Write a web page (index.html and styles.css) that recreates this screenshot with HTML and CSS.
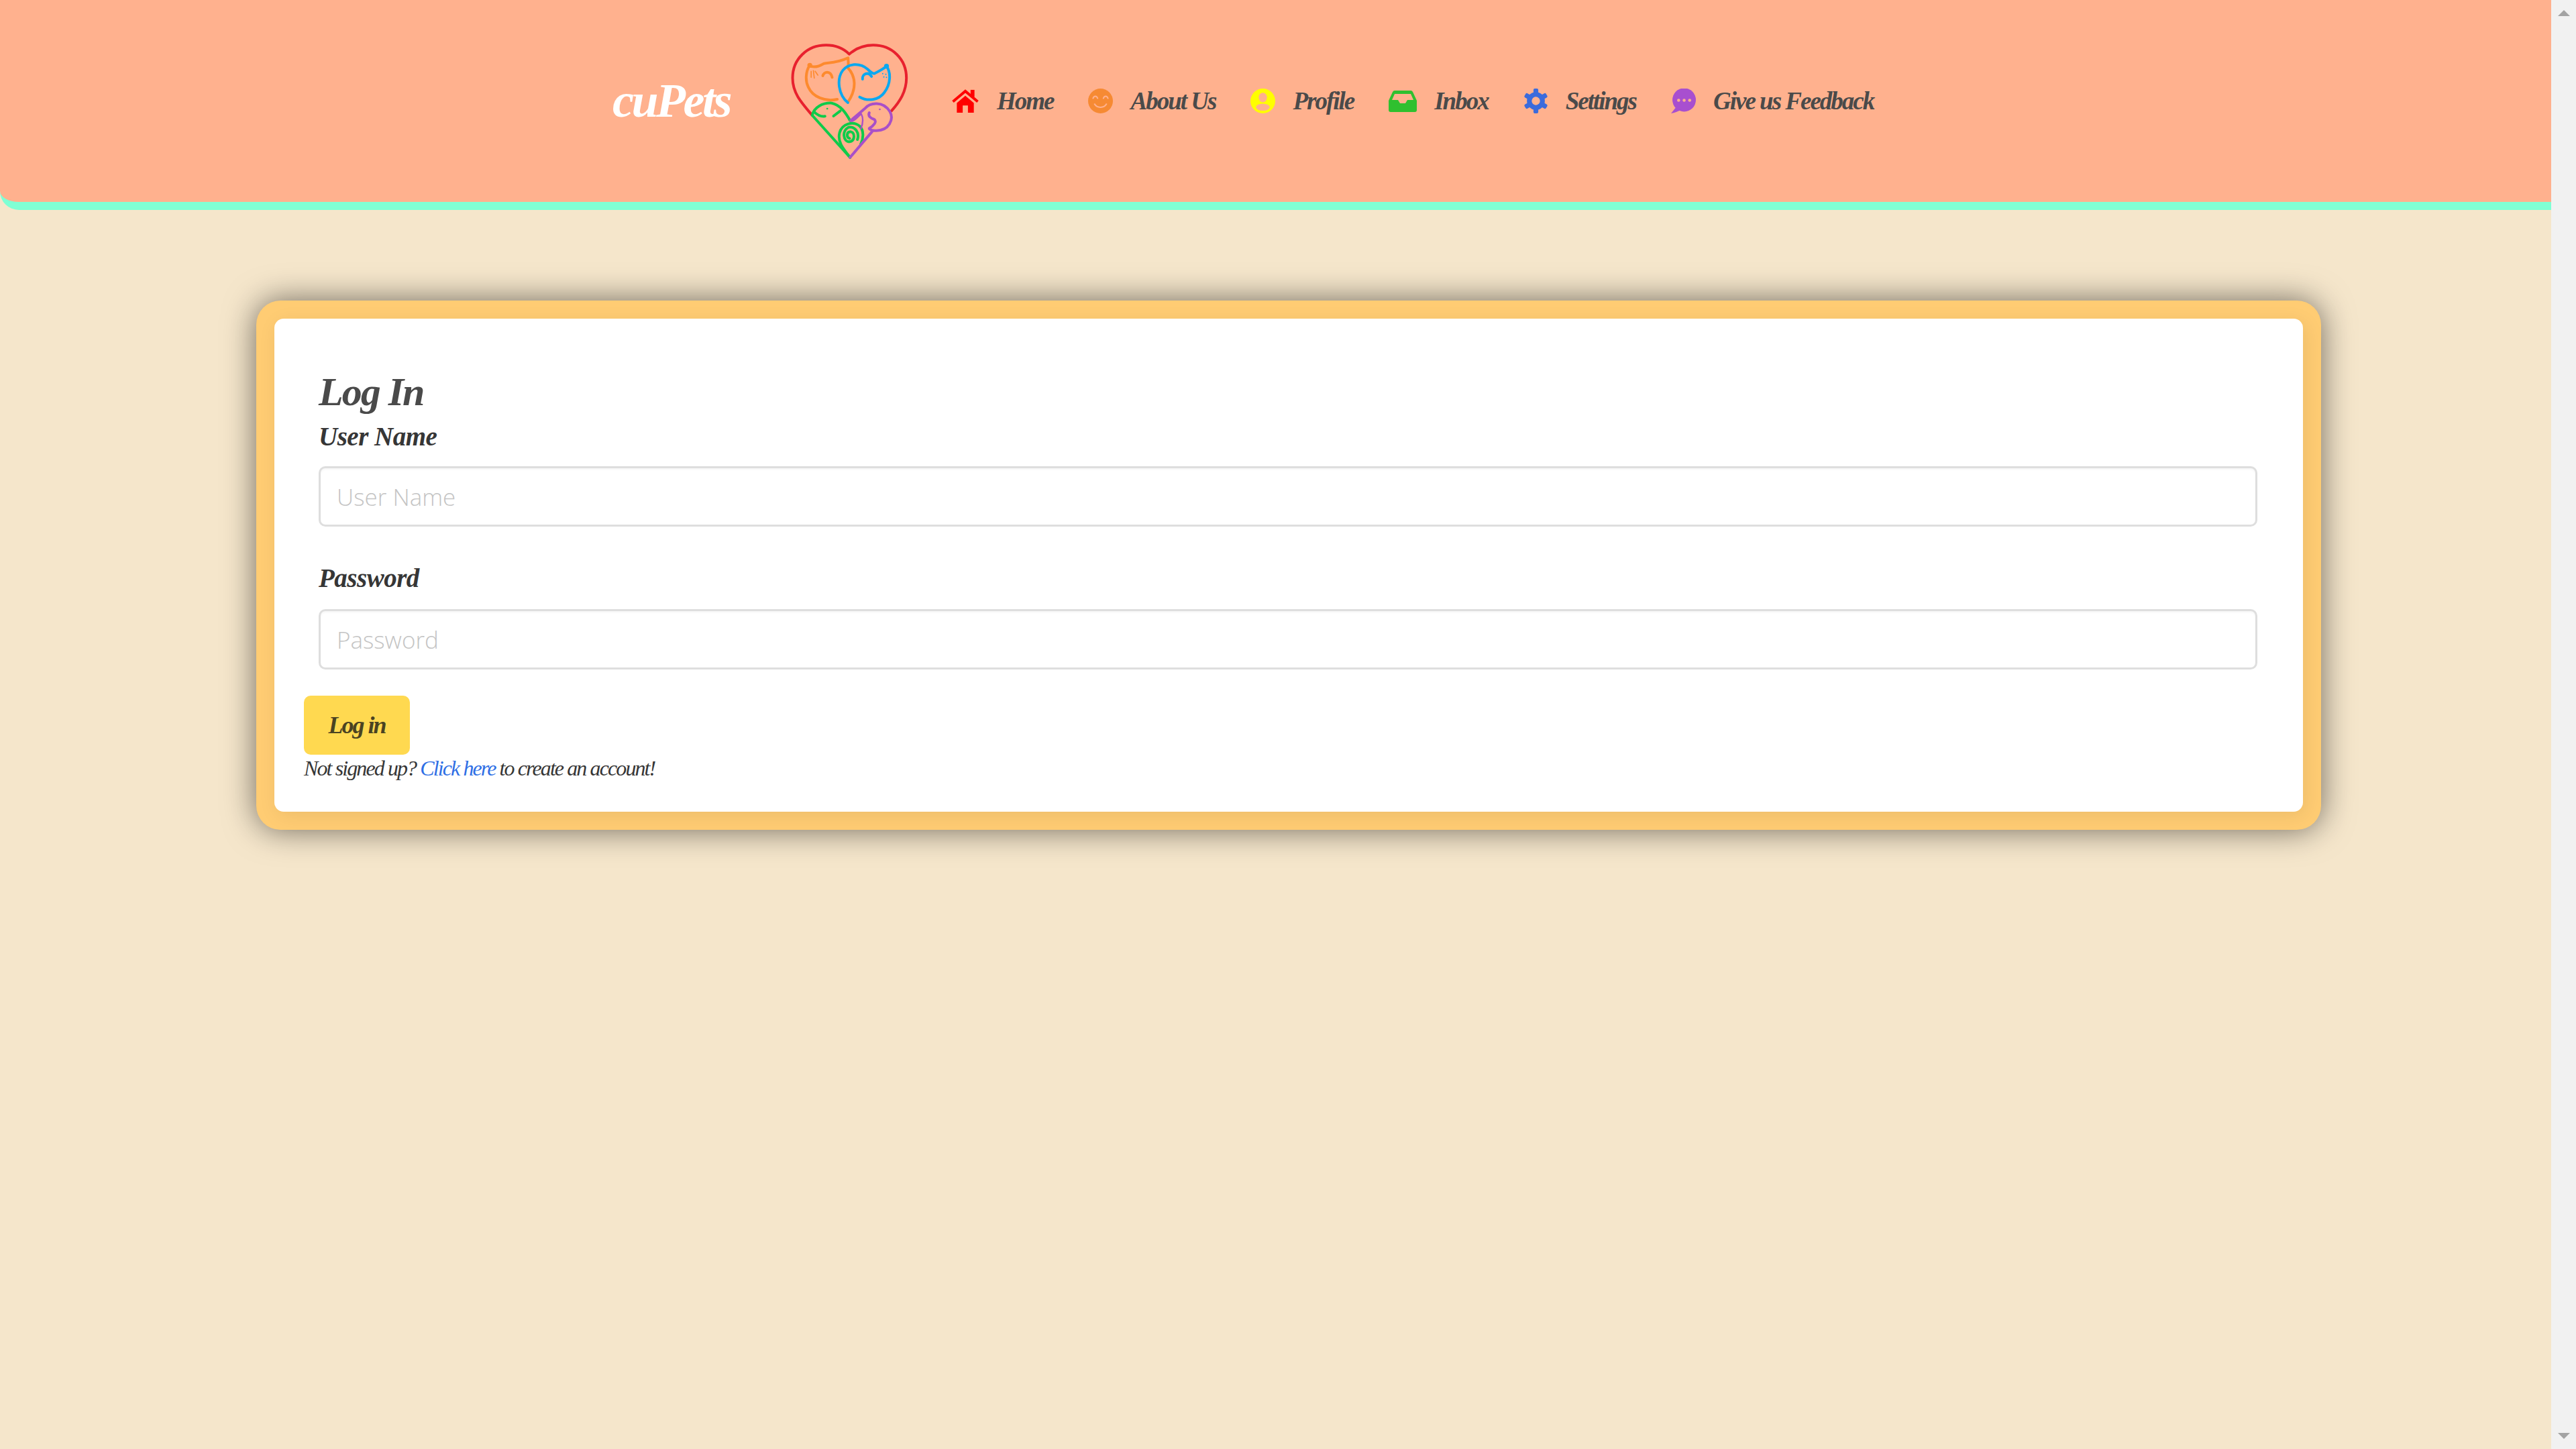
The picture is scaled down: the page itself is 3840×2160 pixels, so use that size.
FILE: index.html
```html
<!DOCTYPE html>
<html lang="en">
<head>
    <meta charset="UTF-8">
    <meta name="viewport" content="width=device-width, initial-scale=1.0">
    <title>cuPets - Log In</title>
    <link rel="stylesheet" href="styles.css">
</head>
<body>
    <div class="page">
        <header class="navbar">
            <a class="brand" href="#">cuPets</a>
            <svg class="logo" viewBox="85 65 530 525" fill="none" stroke-width="12" stroke-linecap="round" stroke-linejoin="round">
                <path stroke="#e8212e" d="M183 392C130 330 95 290 95 225C95 140 160 78 245 78C290 78 325 95 348 118C375 95 410 78 455 78C540 78 604 140 604 225C604 285 575 330 537 372"/>
                <g stroke="#fd8a2e">
                    <path d="M295 320C240 332 185 310 165 265C150 235 155 195 170 170C190 180 215 172 235 160C260 155 285 160 343 135C345 160 345 170 343 180C375 215 385 270 343 332"/>
                    <path stroke-width="5" d="M178 195L178 222M188 192L192 225M196 195L208 212"/>
                    <path d="M230 215C235 195 265 190 272 222"/>
                    <circle cx="172" cy="168" r="5"/>
                </g>
                <g stroke="#0ba8f0">
                    <path d="M342 335C300 300 290 230 320 190C345 160 395 155 430 185C440 195 450 205 460 205C480 195 500 185 515 172C535 200 535 250 505 290C480 325 430 330 395 310"/>
                    <path d="M408 230C405 205 435 195 448 218"/>
                    <circle cx="515" cy="172" r="5"/>
                    <path stroke-width="6" d="M498 205h.1M512 208h.1M503 220h.1M515 222h.1"/>
                </g>
                <g stroke="#0fcb4a">
                    <path d="M183 392L352 580M183 392C190 355 230 335 270 337C310 345 335 385 352 415"/>
                    <path d="M190 375C205 390 225 398 240 396M278 395L308 372"/>
                    <path stroke-width="8" d="M250 362h.1"/>
                    <path d="M352 580C320 540 295 510 305 470C315 430 365 415 395 440C415 460 412 495 400 520"/>
                    <path d="M350 495C335 490 335 465 355 465C375 470 375 505 350 510C320 510 315 460 345 445C375 440 395 470 385 500"/>
                </g>
                <g stroke="#a94fc8">
                    <path d="M352 580L450 465M355 415L420 360C440 335 500 325 530 375C550 410 525 460 470 460C455 462 445 458 438 452"/>
                    <path d="M438 380C430 395 445 405 460 410C475 420 455 440 438 450"/>
                    <path stroke-width="8" d="M485 365h.1"/>
                    <path stroke-width="7" d="M402 385C385 400 375 415 360 418M402 385C415 410 405 440 400 452"/>
                </g>
            </svg>
            <nav class="nav-links">
                <a class="nav-item" href="#">
                    <svg class="nav-icon home-icon" viewBox="0 0 42 38">
                        <rect x="29" y="2" width="6" height="11" fill="#f00"/>
                        <path d="M2 20L21 4L40 20" fill="none" stroke="#f00" stroke-width="4"/>
                        <path d="M8 22L21 11L34 22V37H25V26H17V37H8Z" fill="#f00"/>
                    </svg>
                    Home
                </a>
                <a class="nav-item" href="#">
                    <svg class="nav-icon" viewBox="0 0 36 36">
                        <circle cx="18" cy="18" r="18" fill="#f68a33"/>
                        <path d="M7 15C8 10 13 10 14 15M22 15C23 10 28 10 29 15M9 22C13 29 23 29 27 22" fill="none" stroke="#ffb18e" stroke-width="2"/>
                    </svg>
                    About Us
                </a>
                <a class="nav-item" href="#">
                    <svg class="nav-icon" viewBox="0 0 36 36">
                        <circle cx="18" cy="18" r="18" fill="#ff0"/>
                        <ellipse cx="18" cy="13" rx="6" ry="7" fill="#ffb18e"/>
                        <ellipse cx="18" cy="27" rx="10" ry="5" fill="#ffb18e"/>
                    </svg>
                    Profile
                </a>
                <a class="nav-item" href="#">
                    <svg class="nav-icon inbox-icon" viewBox="0 0 42 32">
                        <path d="M9 0H33Q35 0 36 2L42 15V29Q42 32 39 32H3Q0 32 0 29V15L6 2Q7 0 9 0ZM9 5L5 14H14L17 19H25L28 14H37L33 5Z" fill="#2fc02f" fill-rule="evenodd"/>
                    </svg>
                    Inbox
                </a>
                <a class="nav-item" href="#">
                    <svg class="nav-icon" viewBox="0 0 36 36">
                        <g fill="#3b6bdc">
                            <circle cx="18" cy="18" r="13"/>
                            <rect x="14.5" width="7" height="36" rx="2"/>
                            <rect x="14.5" width="7" height="36" rx="2" transform="rotate(60 18 18)"/>
                            <rect x="14.5" width="7" height="36" rx="2" transform="rotate(120 18 18)"/>
                        </g>
                        <circle cx="18" cy="18" r="6" fill="#ffb18e"/>
                    </svg>
                    Settings
                </a>
                <a class="nav-item" href="#">
                    <svg class="nav-icon" viewBox="0 0 36 36">
                        <circle cx="19" cy="16.5" r="17" fill="#a84fcf"/>
                        <path d="M8 26L0 36Q8 35 14 31Z" fill="#a84fcf"/>
                        <circle cx="11" cy="17" r="2.2" fill="#ffb18e"/>
                        <circle cx="19" cy="17" r="2.2" fill="#ffb18e"/>
                        <circle cx="27" cy="17" r="2.2" fill="#ffb18e"/>
                    </svg>
                    Give us Feedback
                </a>
            </nav>
        </header>

        <main class="card-wrap">
            <div class="card">
                <form class="card-body">
                    <div class="form-fields">
                        <h2>Log In</h2>
                        <label for="username">User Name</label>
                        <input id="username" type="text" placeholder="User Name">
                        <label class="second" for="password">Password</label>
                        <input id="password" type="password" placeholder="Password">
                    </div>
                    <button type="button">Log in</button>
                    <p class="signup">Not signed up? <a href="#">Click here</a> to create an account!</p>
                </form>
            </div>
        </main>
    </div>

    <div class="scrollbar">
        <span class="arrow-up"></span>
        <span class="arrow-down"></span>
    </div>
</body>
</html>
```

FILE: styles.css
```css
* {
    box-sizing: border-box;
}

body {
    margin: 0;
    height: 100vh;
    overflow: hidden;
    display: flex;
    background-color: #f5e6cb;
    font-family: "Liberation Serif", serif;
    font-style: italic;
    color: #4a4a4a;
}

a {
    text-decoration: none;
}

.page {
    flex: 1;
}

.scrollbar {
    width: 37px;
    background-color: #f1f1f1;
    display: flex;
    flex-direction: column;
    justify-content: space-between;
    align-items: center;
    padding: 15px 0;
}

.arrow-up, .arrow-down {
    border-left: 9px solid transparent;
    border-right: 9px solid transparent;
}

.arrow-up {
    border-bottom: 9px solid #a3a3a3;
}

.arrow-down {
    border-top: 9px solid #a3a3a3;
}

.navbar {
    height: 313px;
    padding-left: 913px;
    background-color: #ffb18e;
    border-bottom: 12px solid #7fffd4;
    border-radius: 0 0 0 28px;
    display: flex;
    align-items: center;
}

.brand {
    width: 265px;
    color: #fff;
    font-size: 72px;
    font-weight: bold;
    letter-spacing: -3.5px;
}

.logo {
    width: 177px;
    height: 175px;
    margin-right: 63px;
}

.nav-links {
    display: flex;
    align-items: center;
    gap: 52px;
}

.nav-item {
    display: flex;
    align-items: center;
    gap: 26px;
    color: #4a4a4a;
    font-size: 37px;
    font-weight: bold;
    letter-spacing: -2px;
}

.nav-icon {
    width: 37px;
    height: 37px;
}

.home-icon, .inbox-icon {
    width: 42px;
}

.inbox-icon {
    height: 32px;
}

.card-wrap {
    padding: 135px 343px 0 382px;
}

.card {
    background-color: #ffcc73;
    padding: 27px;
    border-radius: 36px;
    box-shadow: 0 0 48px rgba(0, 0, 0, 0.55);
}

.card-body {
    background-color: #fff;
    height: 735px;
    padding: 74px 44px 0;
    border-radius: 14px;
    box-shadow: 4px 6px 30px rgba(0, 0, 0, 0.08);
}

.form-fields {
    padding: 0 24px 0 22px;
}

h2 {
    margin: 0;
    font-size: 60px;
    line-height: 70px;
    font-weight: bold;
    letter-spacing: -2px;
}

label {
    display: block;
    height: 76px;
    font-size: 39px;
    line-height: 64px;
    font-weight: bold;
    color: #363636;
    letter-spacing: -0.5px;
}

label.second {
    height: 73px;
    line-height: 54px;
}

input {
    display: block;
    width: 100%;
    height: 90px;
    margin-bottom: 50px;
    padding: 0 24px;
    border: 3px solid #dedede;
    border-radius: 10px;
    box-shadow: inset 0 2px 3px rgba(0, 0, 0, 0.04);
    font-family: "Open Sans", sans-serif;
    font-weight: 300;
    font-size: 35px;
    color: #444;
}

input::placeholder {
    color: #c4c4c4;
    opacity: 1;
}

button {
    display: block;
    width: 158px;
    height: 88px;
    margin-top: -11px;
    border: none;
    border-radius: 10px;
    background-color: #ffd950;
    font-family: inherit;
    font-style: inherit;
    font-weight: bold;
    font-size: 36px;
    letter-spacing: -2px;
    color: #4a4322;
}

.signup {
    margin: 0;
    font-size: 32px;
    line-height: 40px;
    color: #363636;
    letter-spacing: -1.9px;
}

.signup a {
    color: #2f6fe5;
}
```
